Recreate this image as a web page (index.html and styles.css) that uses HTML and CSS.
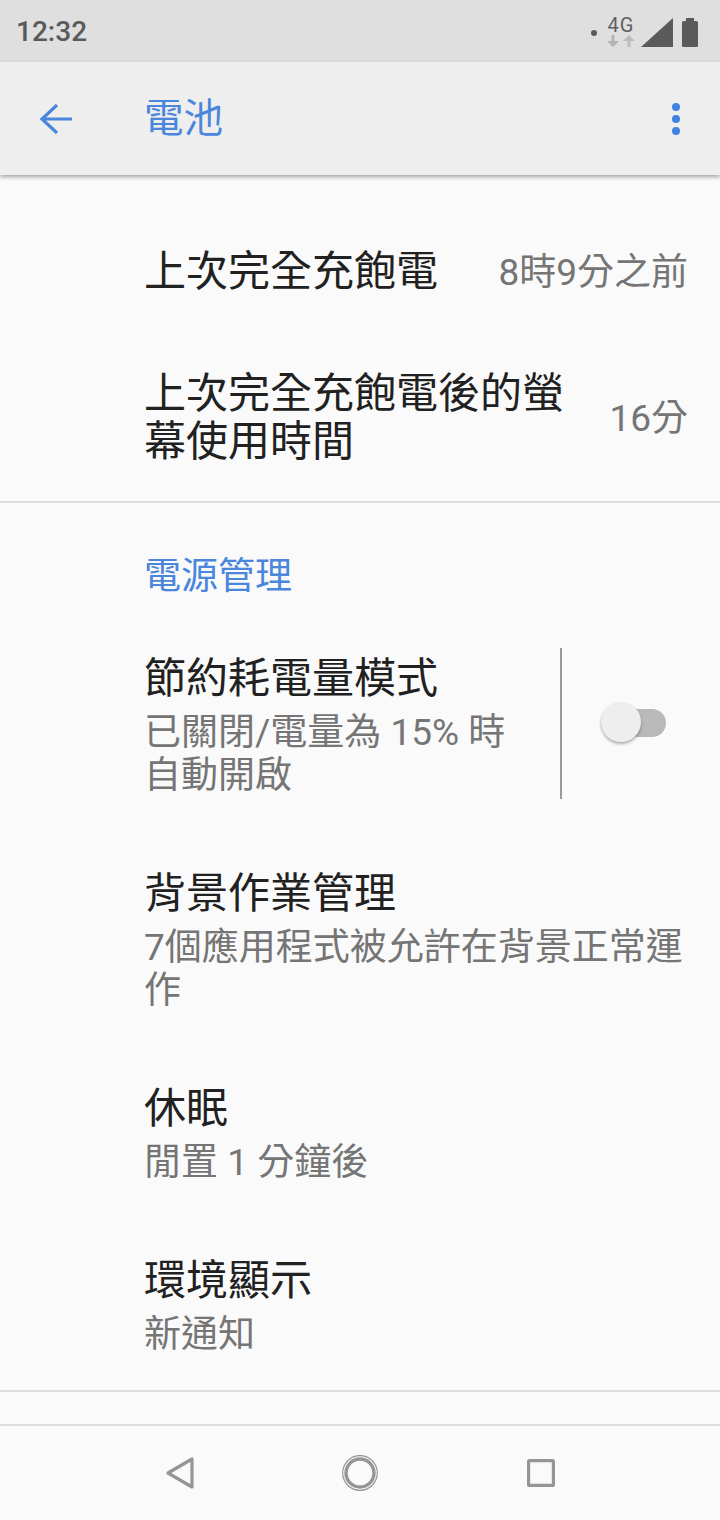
FILE: index.html
```html
<!DOCTYPE html>
<html lang="zh-Hant">
<head>
<meta charset="utf-8">
<title>電池</title>
<link rel="stylesheet" href="styles.css">
</head>
<body>
<div class="screen">
  <header class="status">
    <span class="time">12:32</span>
    <div class="status-icons">
      <span class="dot"></span>
      <div class="net">
        <span class="net-label">4G</span>
        <svg class="net-arrows" width="28" height="12" viewBox="0 0 28 12"><path d="M4.500 0h3v6H12l-6 6-6-6h4.500z" fill="#b4b4b4"/><path d="M20.500 12h3V6H28l-6-6-6 6h4.500z" fill="#bdbdbd"/></svg>
      </div>
      <svg class="signal" width="32" height="29" viewBox="0 0 32 29"><path d="M32 0v29H0z" fill="#5a5a5a"/></svg>
      <svg class="battery" width="16" height="29" viewBox="0 0 16 29"><path d="M4 0h8v3h2.500A1.500 1.500 0 0 1 16 4.500V27.500A1.500 1.500 0 0 1 14.500 29H1.500A1.500 1.500 0 0 1 0 27.500V4.500A1.500 1.500 0 0 1 1.500 3H4z" fill="#5a5a5a"/></svg>
    </div>
  </header>
  <div class="appbar">
    <svg class="back" width="34" height="32" viewBox="0 0 34 32"><path d="M33 16H4M18 2 3 16l15 14" fill="none" stroke="#4a86dc" stroke-width="3.200"/></svg>
    <h1 class="title">電池</h1>
    <div class="more"><i></i><i></i><i></i></div>
  </div>
  <main class="content">
    <section class="group-top">
      <div class="row-info first">
        <span class="item-title">上次完全充飽電</span>
        <span class="value">8時9分之前</span>
      </div>
      <div class="row-info second">
        <span class="item-title narrow">上次完全充飽電後的螢幕使用時間</span>
        <span class="value">16分</span>
      </div>
    </section>
    <section class="group-power">
      <h2 class="heading">電源管理</h2>
      <div class="row-switch">
        <div class="switch-text">
          <div class="item-title">節約耗電量模式</div>
          <div class="sub">已關閉/電量為 15% 時自動開啟</div>
        </div>
        <div class="switch-cell">
          <span class="track"><span class="thumb"></span></span>
        </div>
      </div>
      <div class="item bg">
        <div class="item-title">背景作業管理</div>
        <div class="sub">7個應用程式被允許在背景正常運作</div>
      </div>
      <div class="item sleep">
        <div class="item-title">休眠</div>
        <div class="sub">閒置 1 分鐘後</div>
      </div>
      <div class="item ambient">
        <div class="item-title">環境顯示</div>
        <div class="sub">新通知</div>
      </div>
    </section>
    <div class="spacer"></div>
  </main>
  <nav class="navbar">
    <svg width="28" height="32" viewBox="0 0 28 32"><path d="M26 2v28L2 16z" fill="none" stroke="#959595" stroke-width="3.200" stroke-linejoin="round"/></svg>
    <svg width="36" height="36" viewBox="0 0 36 36"><circle cx="18" cy="18" r="17.300" fill="none" stroke="#959595" stroke-width="1.200"/><circle cx="18" cy="18" r="14" fill="none" stroke="#959595" stroke-width="3.400"/></svg>
    <svg width="28" height="28" viewBox="0 0 28 28"><rect x="1.600" y="1.600" width="24.800" height="24.800" rx="1" fill="none" stroke="#959595" stroke-width="3.200"/></svg>
  </nav>
</div>
</body>
</html>
```
FILE: styles.css
```css
* { box-sizing: border-box; }
html, body { margin: 0; padding: 0; }
body {
  background: #fafafa;
  font-family: "Roboto", "Noto Sans CJK TC", sans-serif;
}
.screen {
  width: 720px;
  height: 1520px;
  display: flex;
  flex-direction: column;
  background: #fafafa;
  overflow: hidden;
}
.status {
  height: 62px;
  flex: none;
  background: #dfdfdf;
  display: flex;
  align-items: center;
  justify-content: space-between;
  padding: 0 22px 0 16px;
}
.time {
  font-size: 28px;
  font-weight: 500;
  color: #5a5a5a;
}
.status-icons {
  display: flex;
  align-items: flex-end;
  height: 30px;
  margin-top: 2px;
}
.dot {
  width: 6px;
  height: 6px;
  border-radius: 50%;
  background: #5a5a5a;
  margin: 0 10px 11px 0;
}
.net {
  width: 28px;
  display: flex;
  flex-direction: column;
  align-items: center;
  margin-right: 6px;
}
.net-label {
  font-size: 20px;
  line-height: 19px;
  color: #5f5f5f;
  letter-spacing: 1px;
}
.net-arrows { display: block; }
.signal { display: block; }
.battery { display: block; margin-left: 9px; }
.appbar {
  height: 113px;
  flex: none;
  background: #eeeeee;
  display: flex;
  align-items: center;
  padding: 0 40px 0 39px;
  box-shadow: 0 2px 4px rgba(0, 0, 0, .35);
  position: relative;
}
.back { display: block; flex: none; }
.title {
  margin: 0 0 0 71px;
  font-size: 39.500px;
  font-weight: 400;
  color: #4a86dc;
  flex: 1;
  line-height: 48px;
}
.more {
  display: flex;
  flex-direction: column;
  gap: 4px;
}
.more i {
  display: block;
  width: 8px;
  height: 8px;
  border-radius: 50%;
  background: #3f82e0;
}
.content { flex: 1; }
.group-top {
  border-bottom: 2px solid #dedede;
  padding: 0 32px 0 144px;
  height: 328px;
}
.row-info {
  display: flex;
  align-items: center;
  justify-content: space-between;
}
.row-info.first { height: 194px; }
.row-info.second { height: 98px; }
.item-title {
  font-size: 42px;
  line-height: 48px;
  color: #212121;
}
.narrow { width: 430px; }
.value {
  font-size: 37px;
  color: #757575;
  white-space: nowrap;
  margin-bottom: 6px;
}
.heading {
  margin: 0;
  padding: 50px 0 0 144px;
  font-size: 37px;
  line-height: 48px;
  font-weight: 400;
  color: #4a86dc;
}
.row-switch {
  display: flex;
  margin-top: 47px;
  height: 151px;
}
.switch-text {
  width: 560px;
  padding: 7px 24px 0 144px;
  flex: none;
}
.sub {
  font-size: 37px;
  line-height: 42.500px;
  color: #757575;
}
.switch-text .sub { margin-top: 9px; }
.switch-cell {
  flex: none;
  width: 107px;
  border-left: 2px solid #9a9a9a;
  display: flex;
  align-items: center;
  padding-left: 39px;
}
.track {
  width: 65px;
  height: 28px;
  border-radius: 14px;
  background: #b9b9b9;
  position: relative;
  display: block;
  margin-bottom: 2px;
}
.thumb {
  position: absolute;
  left: 0;
  top: -7px;
  width: 40px;
  height: 40px;
  border-radius: 50%;
  background: #eeeeee;
  box-shadow: 0 2px 3px rgba(0, 0, 0, .3);
}
.item { padding: 0 32px 0 144px; }
.item .sub { margin-top: 9px; }
.bg { margin-top: 71px; }
.sleep { margin-top: 73px; }
.ambient { margin-top: 72px; }
.group-power {
  height: 889px;
  border-bottom: 2px solid #dedede;
}
.spacer {
  height: 32px;
  border-bottom: 2px solid #dedede;
  box-sizing: content-box;
}
.navbar {
  flex: none;
  height: 94px;
  display: flex;
  align-items: center;
  justify-content: center;
  padding-left: 1px;
}
.navbar svg { display: block; flex: none; }
.navbar svg:nth-child(1) { margin-right: 148px; }
.navbar svg:nth-child(3) { margin-left: 149px; }
```
